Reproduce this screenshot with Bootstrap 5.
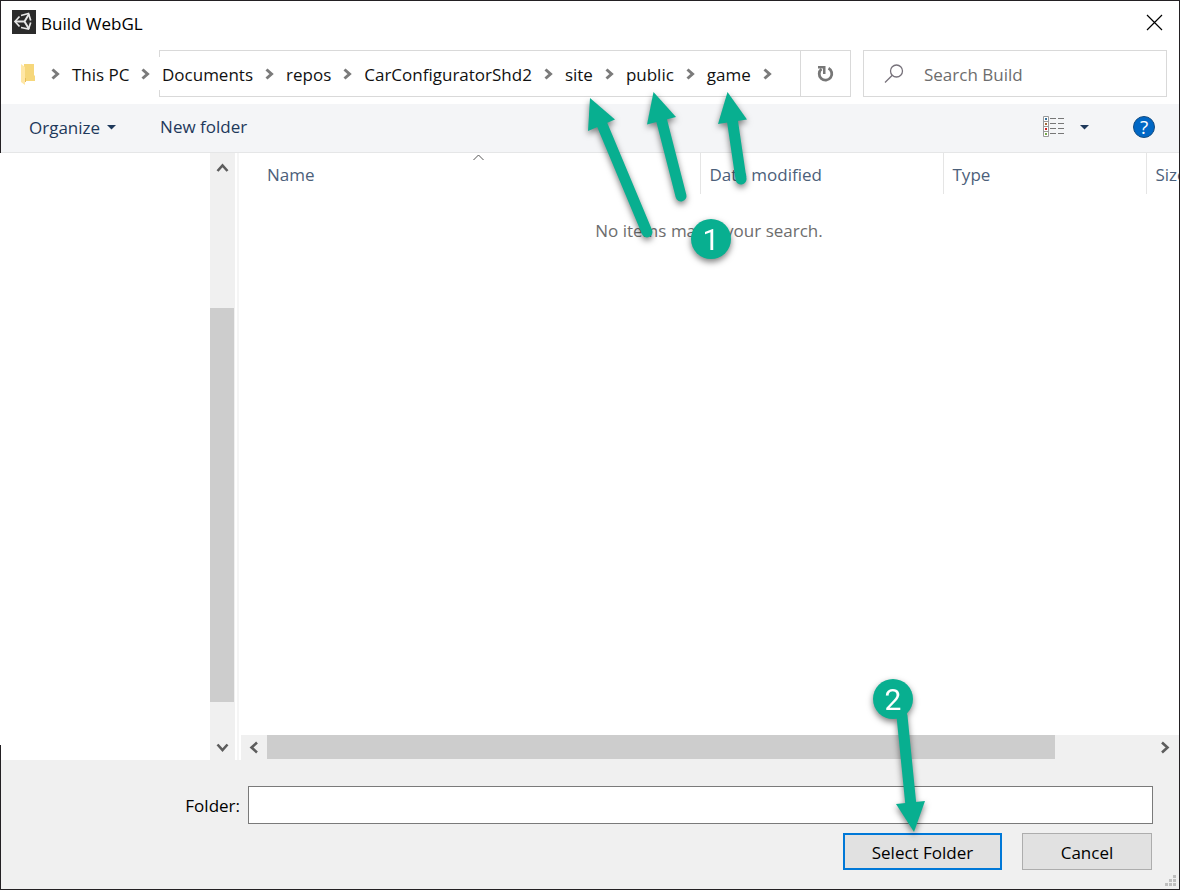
<!DOCTYPE html>
<html lang="en">
<head>
<meta charset="utf-8">
<meta name="viewport" content="width=device-width, initial-scale=1">
<title>Build WebGL</title>
<link href="https://cdn.jsdelivr.net/npm/bootstrap@5.3.0/dist/css/bootstrap.min.css" rel="stylesheet">
<style>
  body { font-family: "Open Sans", "Noto Sans", sans-serif; font-size: 17px; line-height: 24px; color: #000; background: #fff; }
  button, input { font: inherit; color: inherit; }
  svg { display: block; flex: none; }
  .dialog { min-height: 100vh; border: solid #232023; border-width: 1px 1px 1px 0; overflow: hidden; }
  .edge { border-left: 1px solid #232023; }
  .plain { border: 0; background: none; padding: 0; }
  .titlebar { height: 49px; padding: 9px 16px 0 11px; }
  .app-title { gap: 5px; }
  .caption-text { padding-top: 2px; }
  .address { padding: 0 12px 7px 19px; gap: 12px; }
  .path-box { height: 47px; border: 1px solid #d9d9d9; border-left: 0; }
  .path-box::before, .path-box::after { content: ""; position: absolute; left: 0; width: 1px; height: 6px; background: #d9d9d9; }
  .path-box::before { top: 0; }
  .path-box::after { bottom: 0; }
  .roots { width: 139px; padding-right: 9px; }
  .roots .first { margin: 0 12px 0 15px; }
  .trail { gap: 12px; padding-left: 3px; }
  .crumb { color: #111; text-decoration: none; white-space: nowrap; padding-top: 2px; }
  .sep { width: 9px; height: 12px; fill: none; stroke: #7b7b7b; stroke-width: 3; }
  .refresh { width: 50px; border-left: 1px solid #d9d9d9; }
  .search { width: 304px; height: 47px; border: 1px solid #d9d9d9; padding: 0 20px; gap: 20px; }
  .search input { min-width: 0; outline: 0; padding-top: 2px; }
  .search input::placeholder { color: #6d6d6d; opacity: 1; }
  .toolbar { height: 49px; background: #f4f5f7; border-bottom: 1px solid #e5e6e7; padding: 0 24px 2px 28px; color: #1e395b; }
  .toolbar .menu-btn { gap: 7px; padding-top: 2px; }
  .toolbar .view-btn { gap: 15px; }
  .toolbar .apart { margin-left: 44px; }
  .tree { width: 210px; flex: none; }
  .tree::after { content: ""; position: absolute; left: 0; bottom: 0; width: 1px; height: 15px; background: #232023; }
  .vbar { width: 25px; flex: none; background: #f0f0f0; padding: 8px 1px 6px 0; }
  .vthumb { background: #cdcdcd; }
  .vbar .before { flex: 135 0 0; }
  .vbar .vthumb { flex: 394 0 0; }
  .vbar .after { flex: 40 0 0; }
  .splitter { width: 4px; flex: none; border-right: 2px solid #f5f5f5; }
  .pane { min-width: 0; }
  .files { table-layout: fixed; width: 100%; }
  .files th { height: 41px; padding: 3px 0 0 9px; font-weight: 400; color: #4c607a; border-left: 1px solid #e5e5e5; overflow: hidden; white-space: nowrap; }
  .files th:first-child { border-left: 0; padding-left: 28px; position: relative; }
  .files td { padding-top: 25px; text-align: center; color: #6d6d6d; }
  .col-date { width: 243px; }
  .col-type { width: 203px; }
  .col-size { width: 33px; }
  .sort { position: absolute; top: 1px; left: 50%; margin-left: 4px; }
  .hbar { height: 25px; background: #f0f0f0; margin-left: 2px; padding: 0 8px; }
  .hbar .hthumb { flex: 788 0 0; height: 24px; background: #cdcdcd; }
  .hbar .rest { flex: 98 0 0; }
  .foot { background: #f0f0f0; padding: 26px 26px 19px 0; }
  .folder-label { width: 239px; padding-top: 1px; }
  .folder-input { height: 38px; border: 1px solid #7a7a7a; background: #fff; padding: 0 6px; min-width: 0; }
  .actions { gap: 20px; padding: 9px 1px 0 0; }
  .cmd { height: 37px; width: 130px; background: #e1e1e1; border: 1px solid #adadad; padding: 2px 0 0; }
  .cmd.main { width: 159px; border: 2px solid #0078d7; }
  .grip { position: absolute; right: 3px; bottom: 3px; }
  .callout { position: absolute; pointer-events: none; overflow: visible; filter: drop-shadow(0 3px 3px rgba(0,0,0,.5)); fill: #08af90; }
  .callout line { stroke: #08af90; stroke-width: 11; stroke-linecap: round; }
  .callout text { font: 30px Roboto, sans-serif; fill: #fff; text-anchor: middle; }
  .callout-path { left: 580px; top: 85px; }
  .callout-select { right: 72px; bottom: 36px; }
</style>
</head>
<body>
<svg width="0" height="0" class="position-absolute" aria-hidden="true">
  <symbol id="chev" viewBox="0 0 9 12"><path d="M1.500 1.500 6.500 6 1.500 10.500"/></symbol>
</svg>
<main class="dialog position-relative d-flex flex-column">
  <header class="edge">
    <div class="titlebar d-flex justify-content-between align-items-start">
      <div class="app-title d-flex">
        <svg width="24" height="24" viewBox="0 0 24 24"><path fill="#2b2b2b" d="M0 0h24v24H0z"/><g fill="none" stroke="#e8e8e8" stroke-width="1.700"><path d="M9 5.500 16.500 3.500 18.700 10.500M18.700 12.500 16.500 19 9 17.500M7.500 6.500 3 11.500 7.500 16.500"/><path d="M4 11.500H12.500L17 4M12.500 11.500 17 19" stroke-width="2"/></g></svg>
        <span class="caption-text">Build WebGL</span>
      </div>
      <button class="plain" aria-label="Close"><svg width="17" height="24" viewBox="0 0 17 24"><path d="M1 5 16 20M16 5 1 20" stroke="#000" stroke-width="1.200"/></svg></button>
    </div>
    <div class="address d-flex">
      <nav class="d-flex flex-grow-1" aria-label="Folder path">
        <div class="roots d-flex align-items-center">
          <svg width="16" height="24" viewBox="0 0 16 24"><path fill="#f6d77b" d="M4 2h10v11l1 1v5H4z"/><path fill="#ffe7a6" d="M1 2 5 5v18L1 20z"/><path fill="#e9bd59" d="M5 16h1v4H5z"/></svg>
          <svg class="sep first"><use href="#chev"/></svg>
          <a class="crumb" href="#">This PC</a>
          <svg class="sep ms-auto"><use href="#chev"/></svg>
        </div>
        <div class="path-box position-relative d-flex flex-grow-1 justify-content-between">
          <div class="trail d-flex align-items-center">
            <a class="crumb" href="#">Documents</a><svg class="sep"><use href="#chev"/></svg>
            <a class="crumb" href="#">repos</a><svg class="sep"><use href="#chev"/></svg>
            <a class="crumb" href="#">CarConfiguratorShd2</a><svg class="sep"><use href="#chev"/></svg>
            <a class="crumb" href="#">site</a><svg class="sep"><use href="#chev"/></svg>
            <a class="crumb" href="#">public</a><svg class="sep"><use href="#chev"/></svg>
            <a class="crumb" href="#">game</a><svg class="sep"><use href="#chev"/></svg>
          </div>
          <button class="plain refresh d-flex align-items-center justify-content-center" aria-label="Refresh"><svg width="18" height="18" viewBox="0 0 18 18"><path d="M11.500 3.300A6.300 6.300 0 1 1 4.500 4" fill="none" stroke="#777" stroke-width="2.800"/><path d="M1 1H8.500V9H6V3.500H1z" fill="#777"/></svg></button>
        </div>
      </nav>
      <label class="search d-flex align-items-center"><svg width="20" height="20" viewBox="0 0 20 20" fill="none" stroke="#76717a" stroke-width="1.300"><circle cx="12.500" cy="7" r="6"/><path d="M8.300 11.300 1 18.500"/></svg><input class="plain flex-grow-1" type="text" placeholder="Search Build" aria-label="Search Build"></label>
    </div>
    <div class="toolbar d-flex align-items-center">
      <button class="plain menu-btn d-flex align-items-center">Organize <svg width="9" height="7" viewBox="0 0 9 7"><path d="M0 0h9L4.500 4.500z" fill="#1e395b"/></svg></button>
      <button class="plain apart">New folder</button>
      <button class="plain view-btn ms-auto d-flex align-items-center" aria-label="Change view">
        <svg width="22" height="22" viewBox="0 0 22 22"><path d="M.500 .500h5v20h-5zM.500 5.500h5M.500 10.500h5M.500 15.500h5" fill="#fff" stroke="#999"/><path d="M7 2.500h6M15 2.500H21M7 7.500h6M15 7.500H21M7 12.500h6M15 12.500H21M7 17.500h6M15 17.500H21" stroke="#777"/><path fill="#37719b" d="M2 2h2v2H2z"/><path fill="#a56b3c" d="M2 7h2v2H2z"/><path fill="#c22" d="M2 12h2v2H2z"/><path fill="#77a84a" d="M2 17h2v2H2z"/></svg>
        <svg width="9" height="5" viewBox="0 0 9 5"><path d="M0 0h9L4.500 4.500z" fill="#1e395b"/></svg>
      </button>
      <button class="plain apart" aria-label="Help"><svg width="22" height="22" viewBox="0 0 22 22"><circle cx="11" cy="11" r="10.500" fill="#0067c5" stroke="#134b80"/><text x="11" y="18" text-anchor="middle" font-size="19" fill="#fff">?</text></svg></button>
    </div>
  </header>
  <section class="d-flex flex-grow-1">
    <div class="tree position-relative"></div>
    <div class="vbar d-flex flex-column">
      <svg width="24" height="12" viewBox="0 0 24 12" fill="none" stroke="#5d5d5d" stroke-width="2.600"><path d="M7.500 10 12.500 4.500 17.500 10"/></svg>
      <div class="before"></div><div class="vthumb"></div><div class="after"></div>
      <svg width="24" height="12" viewBox="0 0 24 12" fill="none" stroke="#5d5d5d" stroke-width="2.600"><path d="M7.500 2.500 12.500 8 17.500 2.500"/></svg>
    </div>
    <div class="splitter"></div>
    <div class="pane d-flex flex-column flex-grow-1">
      <table class="files">
        <colgroup><col><col class="col-date"><col class="col-type"><col class="col-size"></colgroup>
        <thead><tr><th scope="col" aria-sort="ascending">Name<svg class="sort" width="11" height="7" viewBox="0 0 11 7"><path d="M.500 6 5.500 1 10.500 6" fill="none" stroke="#555"/></svg></th><th scope="col">Date modified</th><th scope="col">Type</th><th scope="col">Size</th></tr></thead>
        <tbody><tr><td colspan="4">No items match your search.</td></tr></tbody>
      </table>
      <div class="hbar d-flex mt-auto">
        <svg width="18" height="25" viewBox="0 0 18 25" fill="none" stroke="#5d5d5d" stroke-width="2.600"><path d="M8 7.500 2.500 12.500 8 17.500"/></svg>
        <div class="hthumb"></div><div class="rest"></div>
        <svg width="18" height="25" viewBox="0 0 18 25" fill="none" stroke="#5d5d5d" stroke-width="2.600"><path d="M9 7.500 14.500 12.500 9 17.500"/></svg>
      </div>
    </div>
  </section>
  <footer class="foot edge position-relative">
    <div class="d-flex align-items-center">
      <label class="folder-label text-end" for="folder">Folder:</label>
      <input id="folder" type="text" class="folder-input flex-grow-1 ms-2">
    </div>
    <div class="actions d-flex justify-content-end">
      <div class="position-relative">
        <button class="cmd main d-block">Select Folder</button>
        <svg class="callout callout-select" width="60" height="160" viewBox="870 674 60 160"><line x1="902" y1="716" x2="911" y2="806"/><path d="M896 804 925 801 914 832z"/><circle cx="893" cy="699" r="20"/><text x="893" y="710">2</text></svg>
      </div>
      <button class="cmd">Cancel</button>
    </div>
    <svg class="grip" width="11" height="11" viewBox="0 0 11 11" fill="#bfbfbf"><path d="M8 0h3v3H8zM4 4h3v3H4zM8 4h3v3H8zM0 8h3v3H0zM4 8h3v3H4zM8 8h3v3H8z"/></svg>
  </footer>
  <svg class="callout callout-path" width="180" height="180" viewBox="580 86 180 180"><line x1="647" y1="232" x2="601" y2="122"/><path d="M590 98 588 131 615 119.500z"/><line x1="681" y1="196" x2="661" y2="118"/><path d="M653.500 92 647 124.500 676 117z"/><line x1="741" y1="179" x2="732" y2="118"/><path d="M727.500 92 718 124 747 119.500z"/><circle cx="711" cy="239" r="20"/><text x="711" y="250">1</text></svg>
</main>
<script src="https://cdn.jsdelivr.net/npm/bootstrap@5.3.0/dist/js/bootstrap.bundle.min.js"></script>
</body>
</html>
